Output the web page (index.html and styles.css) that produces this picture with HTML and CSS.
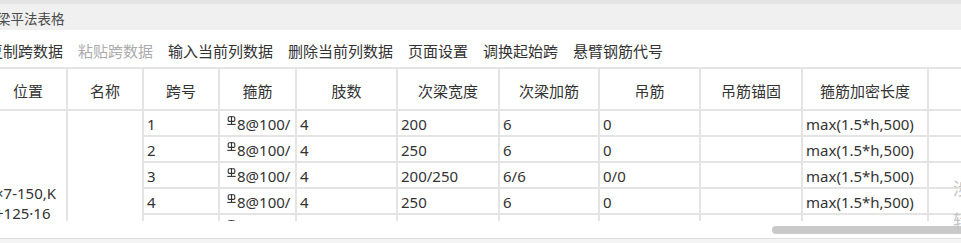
FILE: index.html
```html
<!DOCTYPE html>
<html lang="zh-CN">
<head>
<meta charset="utf-8">
<title>梁平法表格</title>
<link rel="stylesheet" href="styles.css">
</head>
<body>
<div class="app">
  <div class="topstrip"></div>
  <div class="titlebar"><span class="title">梁平法表格</span></div>
  <div class="toolbar">
    <span class="tool">复制跨数据</span>
    <span class="tool disabled">粘贴跨数据</span>
    <span class="tool">输入当前列数据</span>
    <span class="tool">删除当前列数据</span>
    <span class="tool">页面设置</span>
    <span class="tool">调换起始跨</span>
    <span class="tool">悬臂钢筋代号</span>
  </div>
  <div class="table-clip">
    <div class="grid">
      <div class="th">位置</div>
      <div class="th">名称</div>
      <div class="th">跨号</div>
      <div class="th">箍筋</div>
      <div class="th">肢数</div>
      <div class="th">次梁宽度</div>
      <div class="th">次梁加筋</div>
      <div class="th">吊筋</div>
      <div class="th">吊筋锚固</div>
      <div class="th">箍筋加密长度</div>
      <div class="th"></div>

      <div class="td merged pos"><div class="pos-text">×7-150,K<br>+125·16</div></div>
      <div class="td merged"></div>

      <div class="td">1</div>
      <div class="td"><svg class="grade" viewBox="0 0 9 9" width="9" height="9"><rect x="1.2" y="0.8" width="6.6" height="4.6" rx="1.2" fill="none" stroke="#333" stroke-width="1.1"/><line x1="4.5" y1="0" x2="4.5" y2="8.4" stroke="#333" stroke-width="1.1"/><line x1="0.3" y1="8.4" x2="8.7" y2="8.4" stroke="#333" stroke-width="1.1"/></svg>8@100/</div>
      <div class="td">4</div>
      <div class="td">200</div>
      <div class="td">6</div>
      <div class="td">0</div>
      <div class="td"></div>
      <div class="td">max(1.5*h,500)</div>
      <div class="td"></div>

      <div class="td">2</div>
      <div class="td"><svg class="grade" viewBox="0 0 9 9" width="9" height="9"><rect x="1.2" y="0.8" width="6.6" height="4.6" rx="1.2" fill="none" stroke="#333" stroke-width="1.1"/><line x1="4.5" y1="0" x2="4.5" y2="8.4" stroke="#333" stroke-width="1.1"/><line x1="0.3" y1="8.4" x2="8.7" y2="8.4" stroke="#333" stroke-width="1.1"/></svg>8@100/</div>
      <div class="td">4</div>
      <div class="td">250</div>
      <div class="td">6</div>
      <div class="td">0</div>
      <div class="td"></div>
      <div class="td">max(1.5*h,500)</div>
      <div class="td"></div>

      <div class="td">3</div>
      <div class="td"><svg class="grade" viewBox="0 0 9 9" width="9" height="9"><rect x="1.2" y="0.8" width="6.6" height="4.6" rx="1.2" fill="none" stroke="#333" stroke-width="1.1"/><line x1="4.5" y1="0" x2="4.5" y2="8.4" stroke="#333" stroke-width="1.1"/><line x1="0.3" y1="8.4" x2="8.7" y2="8.4" stroke="#333" stroke-width="1.1"/></svg>8@100/</div>
      <div class="td">4</div>
      <div class="td">200/250</div>
      <div class="td">6/6</div>
      <div class="td">0/0</div>
      <div class="td"></div>
      <div class="td">max(1.5*h,500)</div>
      <div class="td"></div>

      <div class="td">4</div>
      <div class="td"><svg class="grade" viewBox="0 0 9 9" width="9" height="9"><rect x="1.2" y="0.8" width="6.6" height="4.6" rx="1.2" fill="none" stroke="#333" stroke-width="1.1"/><line x1="4.5" y1="0" x2="4.5" y2="8.4" stroke="#333" stroke-width="1.1"/><line x1="0.3" y1="8.4" x2="8.7" y2="8.4" stroke="#333" stroke-width="1.1"/></svg>8@100/</div>
      <div class="td">4</div>
      <div class="td">250</div>
      <div class="td">6</div>
      <div class="td">0</div>
      <div class="td"></div>
      <div class="td">max(1.5*h,500)</div>
      <div class="td"></div>

      <div class="td">5</div>
      <div class="td"><svg class="grade" viewBox="0 0 9 9" width="9" height="9"><rect x="1.2" y="0.8" width="6.6" height="4.6" rx="1.2" fill="none" stroke="#333" stroke-width="1.1"/><line x1="4.5" y1="0" x2="4.5" y2="8.4" stroke="#333" stroke-width="1.1"/><line x1="0.3" y1="8.4" x2="8.7" y2="8.4" stroke="#333" stroke-width="1.1"/></svg>8@100/</div>
      <div class="td">4</div>
      <div class="td">200</div>
      <div class="td">6</div>
      <div class="td">0</div>
      <div class="td"></div>
      <div class="td">max(1.5*h,500)</div>
      <div class="td"></div>
    </div>
  </div>
  <div class="scroll-area"><div class="scroll-thumb"></div></div>
  <div class="footer"></div>
  <div class="ghost">涉<br>转</div>
</div>
</body>
</html>
```

FILE: styles.css
```css
* { box-sizing: border-box; }
html, body {
  margin: 0;
  padding: 0;
  background: #ffffff;
}
body {
  width: 961px;
  height: 243px;
  overflow: hidden;
  font-family: "Noto Sans", "Noto Sans CJK SC", sans-serif;
  color: #333333;
}
.app {
  position: relative;
  width: 961px;
  height: 243px;
  overflow: hidden;
}
.topstrip {
  height: 4px;
  background: #e4e4e4;
}
.titlebar {
  height: 26px;
  background: #f0f0f0;
  padding-top: 2px;
  display: flex;
  align-items: center;
}
.title {
  margin-left: -3px;
  font-size: 13.5px;
  color: #4a4a4a;
}
.toolbar {
  height: 37px;
  display: flex;
  align-items: center;
  gap: 15px;
  padding-top: 3px;
  margin-left: -12px;
  background: #ffffff;
}
.tool {
  font-size: 15px;
  color: #333333;
  white-space: nowrap;
}
.tool.disabled {
  color: #ababab;
}
.table-clip {
  height: 154px;
  overflow: hidden;
}
.grid {
  display: grid;
  grid-template-columns: 76px 74px 74px 75px 99px 100px 98px 99px 100px 124px 60px;
  grid-template-rows: 40px repeat(5, 24px);
  gap: 2px;
  padding: 2px;
  margin-left: -12px;
  width: max-content;
  background: #e4e4e4;
}
.th {
  background: #ffffff;
  font-size: 15px;
  color: #333333;
  display: flex;
  align-items: center;
  justify-content: center;
  padding-top: 3px;
  white-space: nowrap;
}
.td {
  background: #ffffff;
  font-size: 15px;
  line-height: 24px;
  padding-left: 3px;
  padding-top: 1px;
  white-space: nowrap;
  overflow: hidden;
  color: #333333;
}
.merged {
  grid-row: span 5;
}
.grid > .merged:nth-child(12) { grid-column: 1; }
.grid > .merged:nth-child(13) { grid-column: 2; }
.pos {
  padding-left: 5px;
  padding-top: 72px;
}
.pos-text {
  line-height: 20px;
  font-size: 15px;
}
.grade {
  margin-left: 4px;
  margin-right: 1px;
  vertical-align: 5px;
}
.scroll-area {
  height: 17px;
  padding-top: 5px;
  background: #ffffff;
}
.scroll-thumb {
  margin-left: 772px;
  width: 220px;
  height: 8px;
  border-radius: 4px;
  background: #c9c9c9;
}
.footer {
  height: 5px;
  border-top: 1px solid #dedede;
  background: #f4f4f4;
}
.ghost {
  position: absolute;
  left: 953px;
  top: 173px;
  font-size: 17px;
  line-height: 32px;
  color: #c4c4c4;
}
```
